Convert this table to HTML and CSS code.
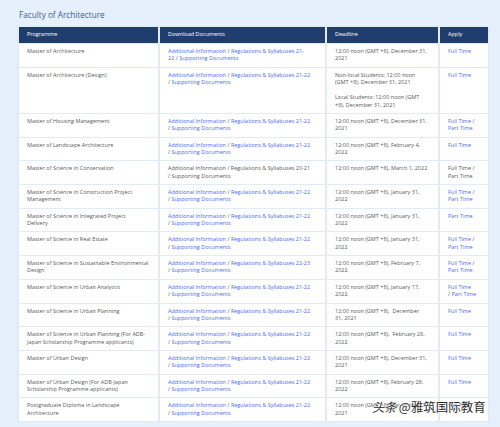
FILE: index.html
```html
<!DOCTYPE html>
<html lang="en">
<head>
<meta charset="utf-8">
<title>Faculty of Architecture</title>
<link rel="stylesheet" href="styles.css">
</head>
<body>
<div class="page">
  <h2 class="title">Faculty of Architecture</h2>
  <table class="prog">
    <colgroup>
      <col class="c1"><col class="c2"><col class="c3"><col class="c4">
    </colgroup>
    <thead>
      <tr><th>Programme</th><th>Download Documents</th><th>Deadline</th><th>Apply</th></tr>
    </thead>
    <tbody>
      <tr>
        <td>Master of Architecture</td>
        <td><a>Additional Information</a> / <a>Regulations &amp; Syllabuses 21-<br>22</a> / <a>Supporting Documents</a></td>
        <td>12:00 noon (GMT +8), December 31,<br>2021</td>
        <td><a>Full Time</a></td>
      </tr>
      <tr>
        <td>Master of Architecture (Design)</td>
        <td><a>Additional Information</a> / <a>Regulations &amp; Syllabuses 21-22</a><br>/ <a>Supporting Documents</a></td>
        <td><p class="para">Non-local Students: 12:00 noon<br>(GMT +8), December 31, 2021</p><p class="para">Local Students: 12:00 noon (GMT<br>+8), December 31, 2021</p></td>
        <td><a>Full Time</a></td>
      </tr>
      <tr>
        <td>Master of Housing Management</td>
        <td><a>Additional Information</a> / <a>Regulations &amp; Syllabuses 21-22</a><br>/ <a>Supporting Documents</a></td>
        <td>12:00 noon (GMT +8), December 31,<br>2021</td>
        <td><a>Full Time</a> /<br><a>Part Time</a></td>
      </tr>
      <tr>
        <td>Master of Landscape Architecture</td>
        <td><a>Additional Information</a> / <a>Regulations &amp; Syllabuses 21-22</a><br>/ <a>Supporting Documents</a></td>
        <td>12:00 noon (GMT +8), February 4,<br>2022</td>
        <td><a>Full Time</a></td>
      </tr>
      <tr>
        <td>Master of Science in Conservation</td>
        <td>Additional Information / Regulations &amp; Syllabuses 20-21<br>/ Supporting Documents</td>
        <td>12:00 noon (GMT +8), March 1, 2022</td>
        <td>Full Time /<br>Part Time</td>
      </tr>
      <tr>
        <td>Master of Science in Construction Project<br>Management</td>
        <td><a>Additional Information</a> / <a>Regulations &amp; Syllabuses 21-22</a><br>/ <a>Supporting Documents</a></td>
        <td>12:00 noon (GMT +8), January 31,<br>2022</td>
        <td><a>Full Time</a> /<br><a>Part Time</a></td>
      </tr>
      <tr>
        <td>Master of Science in Integrated Project<br>Delivery</td>
        <td><a>Additional Information</a> / <a>Regulations &amp; Syllabuses 21-22</a><br>/ <a>Supporting Documents</a></td>
        <td>12:00 noon (GMT +8), January 31,<br>2022</td>
        <td><a>Part Time</a></td>
      </tr>
      <tr>
        <td>Master of Science in Real Estate</td>
        <td><a>Additional Information</a> / <a>Regulations &amp; Syllabuses 21-22</a><br>/ <a>Supporting Documents</a></td>
        <td>12:00 noon (GMT +8), January 31,<br>2022</td>
        <td><a>Full Time</a> /<br><a>Part Time</a></td>
      </tr>
      <tr>
        <td>Master of Science in Sustainable Environmental<br>Design</td>
        <td><a>Additional Information</a> / <a>Regulations &amp; Syllabuses 22-23</a><br>/ <a>Supporting Documents</a></td>
        <td>12:00 noon (GMT +8), February 7,<br>2022</td>
        <td><a>Full Time</a> /<br><a>Part Time</a></td>
      </tr>
      <tr>
        <td>Master of Science in Urban Analytics</td>
        <td><a>Additional Information</a> / <a>Regulations &amp; Syllabuses 21-22</a><br>/ <a>Supporting Documents</a></td>
        <td>12:00 noon (GMT +8), January 17,<br>2022</td>
        <td><a>Full Time</a><br>/ <a>Part Time</a></td>
      </tr>
      <tr>
        <td>Master of Science in Urban Planning</td>
        <td><a>Additional Information</a> / <a>Regulations &amp; Syllabuses 21-22</a><br>/ <a>Supporting Documents</a></td>
        <td>12:00 noon (GMT +8),&nbsp; December<br>31, 2021</td>
        <td><a>Full Time</a></td>
      </tr>
      <tr>
        <td>Master of Science in Urban Planning (For ADB-<br>Japan Scholarship Programme applicants)</td>
        <td><a>Additional Information</a> / <a>Regulations &amp; Syllabuses 21-22</a><br>/ <a>Supporting Documents</a></td>
        <td>12:00 noon (GMT +8),&nbsp; February 28,<br>2022</td>
        <td><a>Full Time</a></td>
      </tr>
      <tr>
        <td>Master of Urban Design</td>
        <td><a>Additional Information</a> / <a>Regulations &amp; Syllabuses 21-22</a><br>/ <a>Supporting Documents</a></td>
        <td>12:00 noon (GMT +8), December 31,<br>2021</td>
        <td><a>Full Time</a></td>
      </tr>
      <tr>
        <td>Master of Urban Design (For ADB-Japan<br>Scholarship Programme applicants)</td>
        <td><a>Additional Information</a> / <a>Regulations &amp; Syllabuses 21-22</a><br>/ <a>Supporting Documents</a></td>
        <td>12:00 noon (GMT +8), February 28,<br>2022</td>
        <td><a>Full Time</a></td>
      </tr>
      <tr>
        <td>Postgraduate Diploma in Landscape<br>Architecture</td>
        <td><a>Additional Information</a> / <a>Regulations &amp; Syllabuses 21-22</a><br>/ <a>Supporting Documents</a></td>
        <td>12:00 noon (GMT +8), December 31,<br>2021</td>
        <td><a>Full Time</a></td>
      </tr>
    </tbody>
  </table>
  <div class="watermark"><span class="wm-logo">头条</span> @雅筑国际教育</div>
</div>
</body>
</html>
```

FILE: styles.css
```css
html, body {
  margin: 0;
  padding: 0;
}
body {
  background: #e6f0fc;
  font-family: "Open Sans", "Liberation Sans", sans-serif;
  color: #555;
}
.page {
  position: relative;
  width: 500px;
  height: 427px;
  overflow: hidden;
  padding: 8px 0 0 17px;
  box-sizing: border-box;
}
.title {
  margin: 0 0 0 2px;
  font-size: 8.2px;
  font-weight: 400;
  line-height: 14px;
  color: #43608f;
}
.prog {
  margin-top: 4px;
  width: 467px;
  table-layout: fixed;
  border-collapse: separate;
  border-spacing: 2px 1px;
  background: #e1eaf5;
  font-size: 5.5px;
  line-height: 7.35px;
}
.c1 { width: 139px; }
.c2 { width: 165px; }
.c3 { width: 111px; }
.c4 { width: 48px; }
.prog th {
  background: #1f3d6d;
  color: #fff;
  font-weight: 400;
  text-align: left;
  padding: 4.3px 8px;
  height: 7px;
}
.prog td {
  background: #fff;
  vertical-align: top;
  padding: 4px 8px 4px 8px;
  color: #5a5a5a;
  white-space: nowrap;
}
.prog a {
  color: #4a6cf2;
  text-decoration: none;
}
.para {
  margin: 0;
}
.para + .para {
  margin-top: 8px;
}
.watermark {
  position: absolute;
  left: 372px;
  top: 397px;
  font-family: "Noto Sans CJK SC", sans-serif;
  font-size: 12.5px;
  line-height: 20px;
  color: #2b2b2b;
  white-space: nowrap;
  text-shadow: 0 0 1px #fff, 0 0 1px #fff, 0 0 2px #fff;
}
.wm-logo {
  font-style: italic;
  letter-spacing: -0.5px;
}
```
